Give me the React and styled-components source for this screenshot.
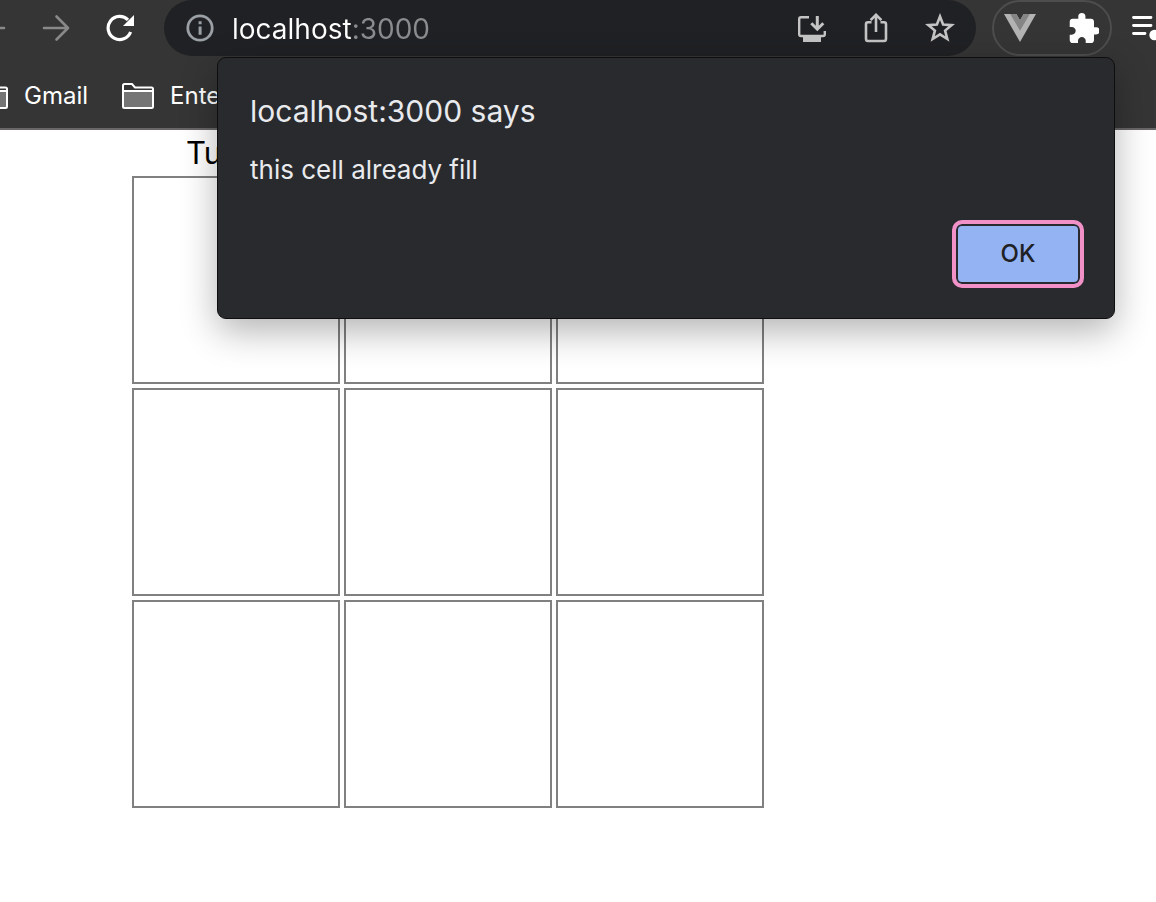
import React from "react";
import styled, { createGlobalStyle } from "styled-components";

const GlobalStyle = createGlobalStyle`
  * { box-sizing: border-box; }
  body {
    margin: 0;
    background: #ffffff;
    font-family: Inter, "Liberation Sans", sans-serif;
    overflow-x: hidden;
  }
`;

const Window = styled.div`
  position: relative;
  min-height: 100vh;
  overflow: hidden;
`;

const Chrome = styled.header`
  background: #353535;
  border-bottom: 2px solid #696767;
`;

const Toolbar = styled.div`
  display: flex;
  align-items: center;
  height: 56px;
  margin-left: -40px;
  margin-right: -24px;
`;

const IconButton = styled.button`
  flex: none;
  display: grid;
  place-items: center;
  width: 64px;
  height: 56px;
  padding: 0;
  border: 0;
  background: transparent;
  color: ${(p) => p.$color || "#ffffff"};
`;

const AddressBar = styled.div`
  flex: 1;
  min-width: 0;
  display: flex;
  align-items: center;
  height: 56px;
  margin: 0 16px 0 12px;
  padding-right: 4px;
  border-radius: 28px;
  background: #202124;
`;

const SiteInfo = styled(IconButton)`
  width: 68px;
  padding-left: 4px;
`;

const Address = styled.input`
  flex: 1;
  min-width: 0;
  height: 42px;
  padding: 2px 0 0;
  border: 0;
  outline: 0;
  font: 400 28px/40px Inter, sans-serif;
  color: #ffffff;
  background: linear-gradient(90deg, #ffffff 120px, #8b8c8e 120px);
  background-clip: text;
  -webkit-background-clip: text;
  -webkit-text-fill-color: transparent;
`;

const Extensions = styled.div`
  flex: none;
  display: flex;
  align-items: center;
  justify-content: space-between;
  width: 120px;
  height: 56px;
  margin-right: 4px;
  border: 2px solid #4d4d4d;
  border-radius: 28px;
  ${IconButton} { width: 52px; height: 52px; }
`;

const Bookmarks = styled.nav`
  display: flex;
  align-items: center;
  gap: 34px;
  height: 72px;
  margin-left: -24px;
  padding-top: 8px;
`;

const Bookmark = styled.a`
  display: flex;
  align-items: center;
  gap: 16px;
  color: #ffffff;
  font-size: 24px;
  line-height: 32px;
  text-decoration: none;
`;

const Page = styled.main`
  padding: 2px 132px 0;
`;

const Status = styled.p`
  margin: 0;
  padding: 0 0 2px 54px;
  font-size: 31px;
  line-height: 42px;
  color: #000000;
`;

const Board = styled.div`
  display: grid;
  grid-template-columns: repeat(3, 208px);
  grid-auto-rows: 208px;
  gap: 4px;
`;

const Cell = styled.button`
  padding: 0;
  border: 2px solid #808080;
  background: transparent;
`;

const Dialog = styled.section`
  position: absolute;
  top: 57px;
  left: 217px;
  right: 41px;
  padding: 32px 30px 30px 32px;
  border: 1px solid #0e0e0f;
  border-radius: 9px;
  background: #292a2d;
  color: #e8eaed;
  box-shadow: 0 12px 36px rgba(0, 0, 0, 0.3);
`;

const DialogTitle = styled.h1`
  margin: 0 0 18px;
  font-size: 30px;
  font-weight: 400;
  line-height: 42px;
`;

const Message = styled.p`
  margin: 0 0 30px;
  font-size: 26px;
  line-height: 40px;
`;

const Actions = styled.div`
  display: flex;
  justify-content: flex-end;
`;

const OkButton = styled.button`
  width: 132px;
  height: 68px;
  padding: 0;
  border: 4px solid #f291c7;
  border-radius: 10px;
  background: #94b3f3;
  box-shadow: inset 0 0 0 2px #292a2d;
  color: #202124;
  font: 500 24px/32px Inter, sans-serif;
`;

const BackIcon = () => (
  <svg width="28" height="28" viewBox="0 0 28 28" fill="none" stroke="currentColor" strokeWidth="2.6" strokeLinecap="round">
    <path d="M26 14H2M14 2 2 14l12 12" />
  </svg>
);

const ForwardIcon = () => (
  <svg width="28" height="28" viewBox="0 0 28 28" fill="none" stroke="currentColor" strokeWidth="2.6" strokeLinecap="round" strokeLinejoin="round">
    <path d="M2 14H26M14.5 2.5 26 14 14.5 25.5" />
  </svg>
);

const ReloadIcon = () => (
  <svg width="28" height="28" viewBox="0 0 28 28">
    <path d="M24.6 18A11.6 11.6 0 1 1 22 5.8" fill="none" stroke="currentColor" strokeWidth="3.2" />
    <path d="M28 1v11H17z" fill="currentColor" />
  </svg>
);

const InfoIcon = () => (
  <svg width="28" height="28" viewBox="0 0 28 28">
    <circle cx="14" cy="14" r="12.2" fill="none" stroke="currentColor" strokeWidth="2.8" />
    <path d="M12.6 7.3h3v3h-3zM12.6 12.6h3v8.2h-3z" fill="currentColor" />
  </svg>
);

const InstallIcon = () => (
  <svg width="28" height="28" viewBox="0 0 28 28" fill="none" stroke="currentColor" strokeWidth="2.4">
    <path d="M11 3.2H3Q1.2 3.2 1.2 5v15.2Q1.2 22 3 22h22q1.8 0 1.8-1.8V17" />
    <path d="M19.3 2v13M13.3 9.2l6 6 6-6" strokeWidth="3" />
    <path d="M5 22h18v6H5z" fill="currentColor" stroke="none" />
  </svg>
);

const ShareIcon = () => (
  <svg width="24" height="30" viewBox="0 0 24 30" fill="none" stroke="currentColor" strokeWidth="2.6">
    <path d="M7.5 9.3H4Q2 9.3 2 11.3v14.4q0 2.3 2 2.3h16q2 0 2-2.3V11.3q0-2-2-2h-3.5" />
    <path d="M12 19V2M6.6 7.2 12 1.8l5.400 5.400" />
  </svg>
);

const StarIcon = () => (
  <svg width="30" height="30" viewBox="0 0 30 30" fill="none" stroke="currentColor" strokeWidth="2.6">
    <path d="m15 3.500 3.100 8 8.600.6-6.600 5.500 2.200 8.400-7.300-4.600L7.700 26l2.200-8.400-6.600-5.500 8.600-.6z" />
  </svg>
);

const VueIcon = () => (
  <svg width="32" height="28" viewBox="0 0 32 28">
    <path d="M0 0h12.400L16 6.200 19.600 0H32L16 28z" fill="#b3b3b3" />
    <path d="M6.200 0h6.200L16 6.200 19.600 0h6.200L16 16.800z" fill="#858585" />
  </svg>
);

const PuzzleIcon = () => (
  <svg width="30" height="30" viewBox="1.500 1 21 21">
    <path
      fill="currentColor"
      d="M20.500 11H19V7c0-1.100-.9-2-2-2h-4V3.500a2.500 2.500 0 0 0-5 0V5H4c-1.100 0-1.990.9-1.990 2v3.800H3.500c1.490 0 2.700 1.210 2.700 2.700s-1.210 2.700-2.700 2.700H2V20c0 1.100.9 2 2 2h3.800v-1.500c0-1.490 1.210-2.700 2.700-2.700s2.700 1.210 2.700 2.700V22H17c1.100 0 2-.9 2-2v-4h1.500a2.500 2.500 0 0 0 0-5z"
    />
  </svg>
);

const QueueIcon = () => (
  <svg width="32" height="26" viewBox="0 0 32 26" fill="none" stroke="currentColor" strokeWidth="2.800" strokeLinecap="round">
    <path d="M1.500 2.500H19M1.500 10.500H19M1.500 18.500H13" />
    <path d="M26.500 20V4h5" />
    <circle cx="22.500" cy="20" r="5.200" fill="currentColor" stroke="none" />
  </svg>
);

const FolderIcon = () => (
  <svg width="32" height="26" viewBox="0 0 32 26">
    <path d="M1 8h30v16H1z" fill="#757575" />
    <path d="M1 8V2.500Q1 1 2.500 1H10l3 3.500h16.500Q31 4.500 31 6v17.500q0 1.500-1.500 1.500h-27Q1 25 1 23.500zH31" fill="none" stroke="#fff" strokeWidth="2" />
  </svg>
);

const cells = Array.from({ length: 9 }, (_, i) => i + 1);

export default function App() {
  return (
    <Window>
      <GlobalStyle />
      <Chrome>
        <Toolbar>
          <IconButton aria-label="Back" $color="#898989"><BackIcon /></IconButton>
          <IconButton aria-label="Forward" $color="#898989"><ForwardIcon /></IconButton>
          <IconButton aria-label="Reload"><ReloadIcon /></IconButton>
          <AddressBar>
            <SiteInfo aria-label="Site information" $color="#9aa0a6"><InfoIcon /></SiteInfo>
            <Address aria-label="Address" defaultValue="localhost:3000" spellCheck={false} />
            <IconButton aria-label="Install" $color="#c4c4c4"><InstallIcon /></IconButton>
            <IconButton aria-label="Share" $color="#c4c4c4"><ShareIcon /></IconButton>
            <IconButton aria-label="Bookmark this tab" $color="#c4c4c4"><StarIcon /></IconButton>
          </AddressBar>
          <Extensions>
            <IconButton aria-label="Vue devtools"><VueIcon /></IconButton>
            <IconButton aria-label="Extensions"><PuzzleIcon /></IconButton>
          </Extensions>
          <IconButton aria-label="Media controls"><QueueIcon /></IconButton>
        </Toolbar>
        <Bookmarks aria-label="Bookmarks">
          <Bookmark href="#gmail"><FolderIcon />Gmail</Bookmark>
          <Bookmark href="#ente"><FolderIcon />Ente</Bookmark>
        </Bookmarks>
      </Chrome>
      <Page>
        <Status>Tu</Status>
        <Board>
          {cells.map((n) => <Cell key={n} aria-label={`Cell ${n}`} />)}
        </Board>
      </Page>
      <Dialog role="alertdialog" aria-labelledby="dialog-title" aria-describedby="dialog-message">
        <DialogTitle id="dialog-title">localhost:3000 says</DialogTitle>
        <Message id="dialog-message">this cell already fill</Message>
        <Actions><OkButton>OK</OkButton></Actions>
      </Dialog>
    </Window>
  );
}
